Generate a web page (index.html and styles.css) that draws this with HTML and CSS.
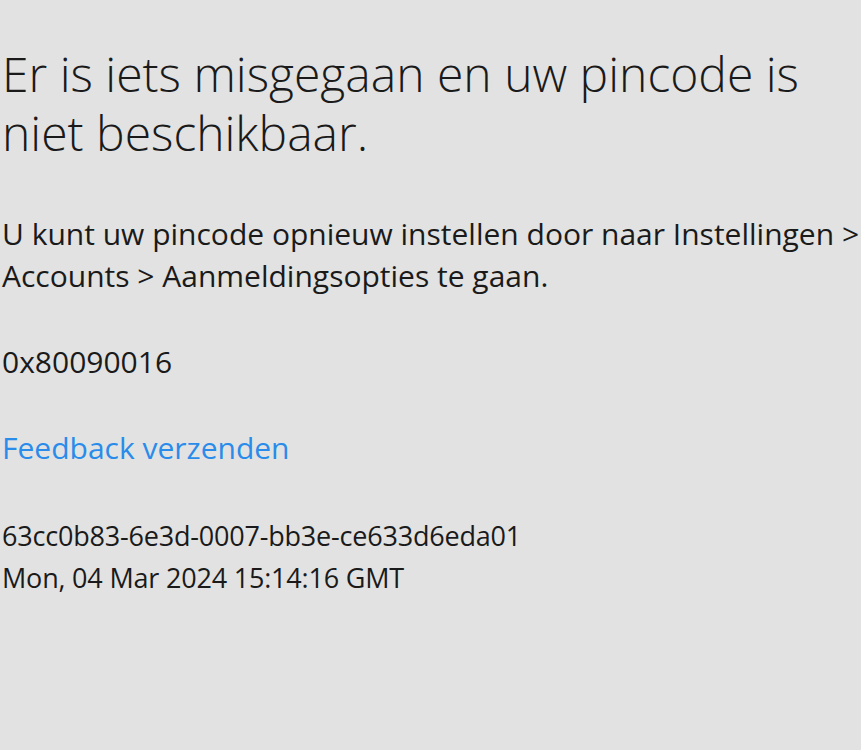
FILE: index.html
```html
<!DOCTYPE html>
<html lang="nl">
<head>
<meta charset="utf-8">
<title>Pincode</title>
<link rel="stylesheet" href="styles.css">
</head>
<body>
<main class="page">
  <h1 class="title">Er is iets misgegaan en uw pincode is<br>niet beschikbaar.</h1>
  <p class="text">U kunt uw pincode opnieuw instellen door naar Instellingen &gt;<br>Accounts &gt; Aanmeldingsopties te gaan.</p>
  <p class="text">0x80090016</p>
  <p class="text"><a class="link" href="#">Feedback verzenden</a></p>
  <p class="text meta">63cc0b83-6e3d-0007-bb3e-ce633d6eda01<br>Mon, 04 Mar 2024 15:14:16 GMT</p>
</main>
</body>
</html>
```
FILE: styles.css
```css
html, body {
  margin: 0;
  padding: 0;
  background: #e2e2e2;
  overflow: hidden;
}
.page {
  padding: 44px 0 0 2px;
  width: 1000px;
  color: #1a1a1a;
  font-family: "Open Sans", "Noto Sans", sans-serif;
  white-space: nowrap;
}
.title {
  margin: 0 0 51px;
  font-size: 48px;
  font-weight: 300;
  line-height: 59px;
}
.text {
  margin: 0 0 44px;
  font-size: 30px;
  line-height: 42px;
}
.meta {
  margin-top: 46px;
  font-size: 27px;
  letter-spacing: -0.2px;
}
.link {
  color: #2a8cea;
  text-decoration: none;
}
```
